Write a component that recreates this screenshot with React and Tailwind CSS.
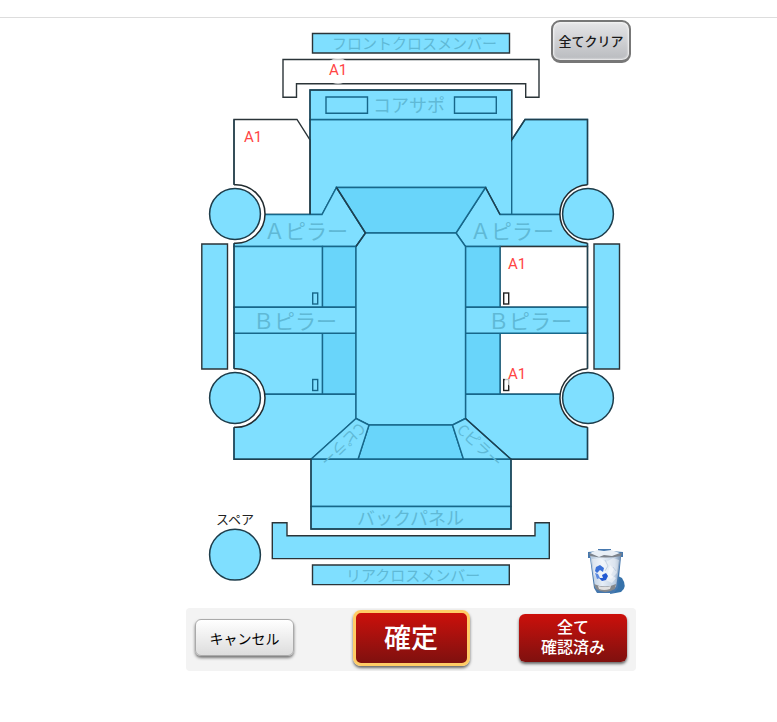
import React from 'react';

const BLUE = '#7fdfff';
const DARK_BLUE = '#69d5fa';
const WHITE = '#ffffff';

// panels of the car, drawn in order
const panels = [
    // front
    { id: 'front-cross', d: 'M312.5 33.5H509.5V53H312.5Z', fill: BLUE, outer: true },
    { id: 'front-bumper', d: 'M283 59.5H539V97.3H525.7V83.7H296.5V97.3H283Z', fill: WHITE, outer: true },
    { id: 'hood', d: 'M310 119.5H511.7V214.5H500L485.5 187.5H336.5L322 214.5H310Z', fill: BLUE },
    { id: 'core-support', d: 'M310 90H511.7V119.5H310Z', fill: BLUE },
    { id: 'lamp-left', d: 'M326 97H367.5V113.3H326Z', fill: BLUE },
    { id: 'lamp-right', d: 'M454.5 97H496.3V113.3H454.5Z', fill: BLUE },
    { id: 'fender-fl', d: 'M234 119.5H297L310 140V214.5H234Z', fill: WHITE, outer: true },
    { id: 'fender-fr', d: 'M587.5 119.5H525L511.7 140V214.5H587.5Z', fill: BLUE },
    // left side
    { id: 'a-pillar-left', d: 'M234 214.5H322L336.5 187.5L365.5 233L356 246.5H234Z', fill: BLUE },
    { id: 'door-fl', d: 'M234 246.5H322.5V307.3H234Z', fill: BLUE },
    { id: 'window-fl', d: 'M322.5 246.5H356V307.3H322.5Z', fill: DARK_BLUE },
    { id: 'door-rl', d: 'M234 333.3H322.5V394.3H234Z', fill: BLUE },
    { id: 'window-rl', d: 'M322.5 333.3H356V394.3H322.5Z', fill: DARK_BLUE },
    { id: 'b-pillar-left', d: 'M234 307.3H356V333.3H234Z', fill: BLUE },
    { id: 'fender-rl', d: 'M234 394.3H356V418.5L311 459.3H234Z', fill: BLUE },
    // right side
    { id: 'a-pillar-right', d: 'M587.5 214.5H500L485.5 187.5L456 233L465.5 246.5H587.5Z', fill: BLUE },
    { id: 'door-fr', d: 'M500 246.5H587.5V307.3H500Z', fill: WHITE, outer: true },
    { id: 'window-fr', d: 'M465.5 246.5H500V307.3H465.5Z', fill: DARK_BLUE },
    { id: 'door-rr', d: 'M500 333.3H587.5V394.3H500Z', fill: WHITE, outer: true },
    { id: 'window-rr', d: 'M465.5 333.3H500V394.3H465.5Z', fill: DARK_BLUE },
    { id: 'b-pillar-right', d: 'M465.5 307.3H587.5V333.3H465.5Z', fill: BLUE },
    { id: 'fender-rr', d: 'M587.5 394.3H465.5V418.5L511 459.3H587.5Z', fill: BLUE },
    // centre
    { id: 'windshield', d: 'M336.5 187.5H485.5L456 233H365.5Z', fill: DARK_BLUE },
    { id: 'roof', d: 'M365.5 233H456L465.5 246.5V418.5L452.5 425H369L356 418.5V246.5Z', fill: BLUE },
    { id: 'rear-window', d: 'M369 425H452.5L463.5 459.3H358Z', fill: DARK_BLUE },
    { id: 'c-pillar-left', d: 'M356 418.5L369 425L358 459.3H311Z', fill: BLUE },
    { id: 'c-pillar-right', d: 'M465.5 418.5L452.5 425L463.5 459.3H511Z', fill: BLUE },
    // rear
    { id: 'trunk', d: 'M311 459.3H511V506.5H311Z', fill: BLUE },
    { id: 'back-panel', d: 'M311 506.5H511V529H311Z', fill: BLUE },
    { id: 'rear-bumper', d: 'M272.3 522.8H287V535.7H535V522.8H549.3V558.6H272.3Z', fill: BLUE, outer: true },
    { id: 'rear-cross', d: 'M312.5 565H509.3V584.6H312.5Z', fill: BLUE, outer: true },
    // side steps
    { id: 'step-left', d: 'M201.8 244H227.5V369H201.8Z', fill: BLUE, outer: true },
    { id: 'step-right', d: 'M594 244H619.5V369H594Z', fill: BLUE, outer: true },
];

// white cut-outs around the wheels
const arches = [
    { id: 'fl', cut: 'M232 184.7H234A29.3 29.3 0 1 1 234 243.2H232Z', line: 'M234 184.7A29.3 29.3 0 1 1 234 243.2' },
    { id: 'rl', cut: 'M232 368.8H234A29.3 29.3 0 1 1 234 427.3H232Z', line: 'M234 368.8A29.3 29.3 0 1 1 234 427.3' },
    { id: 'fr', cut: 'M590 184.7H587.5A29.3 29.3 0 0 0 587.5 243.2H590Z', line: 'M587.5 184.7A29.3 29.3 0 0 0 587.5 243.2' },
    { id: 'rr', cut: 'M590 368.8H587.5A29.3 29.3 0 0 0 587.5 427.3H590Z', line: 'M587.5 368.8A29.3 29.3 0 0 0 587.5 427.3' },
];

// edges that are darker than the inner lines
const edges = [
    'M234 119.5V184.7M234 243.2V368.8M234 427.3V459.3H311V529H511V459.3H587.5V427.3M587.5 368.8V243.2M587.5 184.7V119.5H525L511.7 140V90H310V214.5',
    'M336.5 187.5L365.5 233L356 246.5',
    'M485.5 187.5L500 214.5',
    'M465.5 418.5L511 459.3',
];

const wheels = [
    { id: 'fl', cx: 235, cy: 214 },
    { id: 'fr', cx: 588, cy: 214 },
    { id: 'rl', cx: 235, cy: 398 },
    { id: 'rr', cx: 588, cy: 398 },
    { id: 'spare', cx: 235, cy: 554.7 },
];

const handles = [
    { id: 'fl', x: 312.7, y: 293, stroke: '#17678a' },
    { id: 'rl', x: 312.7, y: 379.5, stroke: '#17678a' },
    { id: 'fr', x: 503.7, y: 293, stroke: '#222222' },
    { id: 'rr', x: 503.7, y: 379.5, stroke: '#222222' },
];

const labels = [
    { text: 'フロントクロスメンバー', x: 332, y: 49, size: 15 },
    { text: 'コアサポ', x: 373, y: 112, size: 18 },
    { text: 'Ａピラー', x: 264, y: 239, size: 21 },
    { text: 'Ａピラー', x: 470, y: 239, size: 21 },
    { text: 'Ｂピラー', x: 253, y: 329, size: 21 },
    { text: 'Ｂピラー', x: 488, y: 329, size: 21 },
    { text: 'バックパネル', x: 357, y: 525, size: 18 },
    { text: 'リアクロスメンバー', x: 346, y: 581, size: 15 },
];

const marks = [
    { id: 'front-bumper', x: 338, y: 70 },
    { id: 'fender-fl', x: 253, y: 137 },
    { id: 'door-fr', x: 517, y: 264 },
    { id: 'door-rr', x: 517, y: 374 },
];

const TrashIcon = () => (
    <g>
        <path d="M614 574L622 578Q628 587 621 592L610 594Z" fill="#3672aa" />
        <path d="M588 552L598 551V549H611V551L623 552V557H621L618 588L614 593H597L594 588L590 558H588Z" fill="#4678ae" />
        <path d="M590 555L621 555L616 587Q606 594 595 587Z" fill="url(#trashBody)" />
        <path d="M592 559L600 558L606 562L613 558L619 560L617 573L611 579L604 573L600 580L594 575Z" fill="#ffffff" opacity="0.45" />
        <path d="M610 565L614 569L611 575L616 578L612 583L606 580Z" fill="#ffffff" opacity="0.5" />
        <path d="M605 560L608 566L605 571M613 567L616 571" fill="none" stroke="#b4c3d9" opacity="0.7" />
        <path d="M594 584Q605 589 616 584L615 589Q605 595 596 589Z" fill="#85888c" />
        <path d="M598 586Q605 588 611 586L610 589Q604 591 599 589Z" fill="#e0e0e0" />
        <path d="M589 553Q606 557 622 553L621 556Q606 559 590 556Z" fill="#7d838b" />
        <path d="M590 553L597 550L604 551L611 550L620 553L612 556L604 555L599 557Z" fill="#e9eff6" />
        <path d="M596 567L600 565L604 568L603 572L600 570L597 573L595 571Z" fill="#3a70d8" />
        <path d="M595 573L598 574L600 578L597 579Z" fill="#5c8ae0" />
        <path d="M602 575L606 573L608 576L606 580L602 581L599 578L603 578Z" fill="#2259d2" />
    </g>
);

const CarDiagram = () => (
    <svg viewBox="186 18 450 590" className="block w-full font-['Noto_Sans_CJK_JP',sans-serif]">
        <defs>
            <linearGradient id="trashBody" x1="0" x2="1">
                <stop offset="0" stopColor="#b3c6db" />
                <stop offset="0.4" stopColor="#e6eef7" />
                <stop offset="0.8" stopColor="#bfcfe2" />
                <stop offset="1" stopColor="#6f8daf" />
            </linearGradient>
        </defs>

        {panels.map((panel) => (
            <path
                key={panel.id}
                d={panel.d}
                fill={panel.fill}
                stroke={panel.outer ? '#2b3438' : '#17678a'}
                strokeWidth="1.4"
            />
        ))}
        {arches.map((arch) => (
            <g key={arch.id}>
                <path d={arch.cut} fill={WHITE} />
                <path d={arch.line} fill="none" stroke="#222c30" strokeWidth="1.5" />
            </g>
        ))}
        {edges.map((d) => (
            <path key={d} d={d} fill="none" stroke="#20404f" strokeWidth="1.4" />
        ))}
        {wheels.map((wheel) => (
            <circle key={wheel.id} cx={wheel.cx} cy={wheel.cy} r="25.4" fill={BLUE} stroke="#1d3c4a" strokeWidth="1.5" />
        ))}
        {handles.map((handle) => (
            <rect key={handle.id} x={handle.x} y={handle.y} width="5" height="11" fill="none" stroke={handle.stroke} strokeWidth="1.4" />
        ))}

        <g fill="#5fb9d6">
            {labels.map((label) => (
                <text key={`${label.text}-${label.x}`} x={label.x} y={label.y} fontSize={label.size}>
                    {label.text}
                </text>
            ))}
            <text transform="translate(359 422) rotate(137)" fontSize="15">Cピラー</text>
            <text transform="translate(456 431) rotate(43)" fontSize="15">Cピラー</text>
        </g>
        <text x="216" y="524" fontSize="13" fill="#222222">スペア</text>

        {/* damage marks */}
        {marks.map((mark) => (
            <g key={mark.id}>
                <circle cx={mark.x} cy={mark.y + 1} r="13" fill="#ffffff" opacity="0.7" />
                <text
                    x={mark.x}
                    y={mark.y + 5}
                    textAnchor="middle"
                    fontSize="15"
                    fill="#ff4444"
                    className="font-[Roboto,sans-serif]"
                >
                    A1
                </text>
            </g>
        ))}

        <TrashIcon />
    </svg>
);

const App = () => {
    return (
        <div className="bg-white font-['Noto_Sans_CJK_JP',sans-serif]">
            <header className="h-[18px] border-b border-[#dddddd]"></header>

            <main className="flex justify-center pl-[45px]">
                <div className="w-full max-w-[450px]">
                    <div className="relative">
                        <CarDiagram />
                        <button
                            type="button"
                            className="absolute top-[2px] right-[5px] w-20 h-[43px] rounded-[9px] border-2 border-b-3 border-[#777777] bg-gradient-to-b from-[#e6e6e8] to-[#b9bbbf] text-[13px] font-medium text-[#1a1a1a] whitespace-nowrap shadow-[inset_0_0_2px_1px_#f5f5f5]"
                        >
                            全てクリア
                        </button>
                    </div>

                    <div className="grid grid-cols-[1fr_auto_1fr] items-center rounded bg-[#f3f3f3] px-[9px] pb-1 h-[63px]">
                        <button
                            type="button"
                            className="justify-self-start w-[99px] h-[37px] rounded-md border border-[#aaaaaa] bg-gradient-to-b from-white to-[#dddddd] text-sm text-black shadow-[0_2px_3px_#777777]"
                        >
                            キャンセル
                        </button>
                        <button
                            type="button"
                            className="w-[117px] h-14 rounded-lg border-3 border-[#ffcc66] bg-gradient-to-b from-[#cc0f0a] to-[#7f100e] text-[27px] font-medium text-white shadow-[0_2px_3px_#666666]"
                        >
                            確定
                        </button>
                        <button
                            type="button"
                            className="justify-self-end w-[108px] h-12 pb-1 rounded-md bg-gradient-to-b from-[#cc0f0a] to-[#7f100e] text-base leading-5 font-medium text-white shadow-[0_2px_3px_#666666]"
                        >
                            全て<br />確認済み
                        </button>
                    </div>
                </div>
            </main>
        </div>
    );
};

export default App;
